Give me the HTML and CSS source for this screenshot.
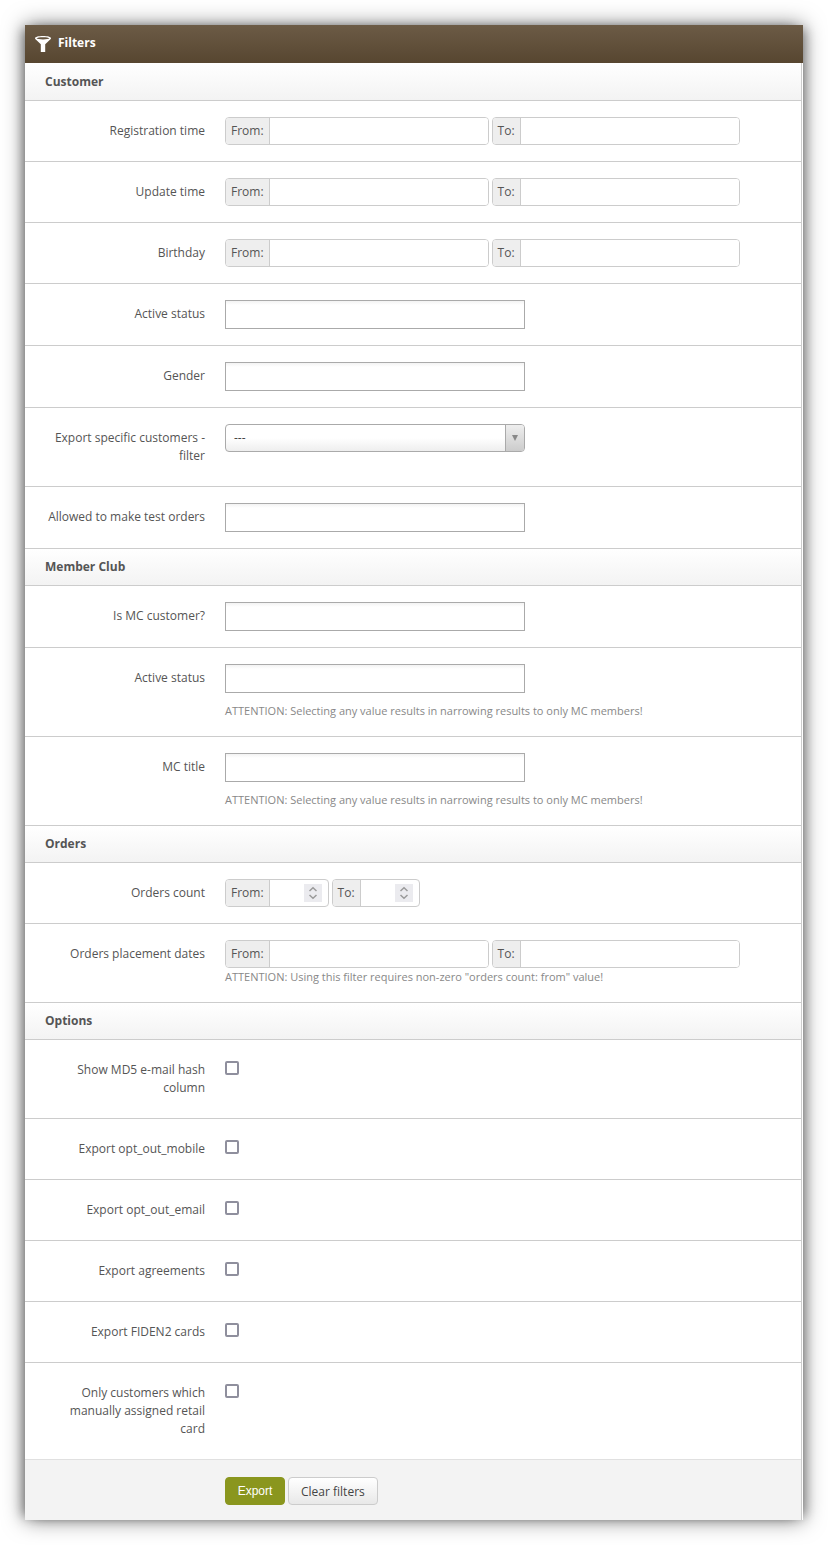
FILE: index.html
```html
<!DOCTYPE html>
<html lang="en">
<head>
<meta charset="utf-8">
<title>Filters</title>
<link rel="stylesheet" href="styles.css">
</head>
<body>
<form class="panel">
  <h2 class="panel-title">
    <svg class="funnel" width="16" height="16" viewBox="0 0 16 16" aria-hidden="true">
      <path fill="#fff" fill-rule="evenodd" d="M8 0C3.600 0 0 .9 0 2.300c0 .5.300.9.800 1.300L5.800 8.300V16H10.200V8.300L15.200 3.600c.5-.4.800-.8.800-1.300C16 .9 12.400 0 8 0ZM8 1.200c3.300 0 5.900.5 6.500 1.100-.6.600-3.200 1.100-6.500 1.100S2.100 2.900 1.500 2.300C2.100 1.700 4.700 1.200 8 1.200Z"/>
    </svg>
    <span class="title-text">Filters</span>
  </h2>
  <div class="panel-body">
    <h3 class="section first">Customer</h3>
    <div class="row"><label class="lbl">Registration time</label><div class="ctl"><div class="pair">
      <span class="grp"><span class="add">From:</span><input class="txt" type="text"></span>
      <span class="grp"><span class="add">To:</span><input class="txt" type="text"></span>
    </div></div></div>
    <div class="row"><label class="lbl">Update time</label><div class="ctl"><div class="pair">
      <span class="grp"><span class="add">From:</span><input class="txt" type="text"></span>
      <span class="grp"><span class="add">To:</span><input class="txt" type="text"></span>
    </div></div></div>
    <div class="row"><label class="lbl">Birthday</label><div class="ctl"><div class="pair">
      <span class="grp"><span class="add">From:</span><input class="txt" type="text"></span>
      <span class="grp"><span class="add">To:</span><input class="txt" type="text"></span>
    </div></div></div>
    <div class="row"><label class="lbl">Active status</label><div class="ctl"><input class="box" type="text"></div></div>
    <div class="row"><label class="lbl">Gender</label><div class="ctl"><input class="box" type="text"></div></div>
    <div class="row"><label class="lbl">Export specific customers - filter</label><div class="ctl">
      <div class="sel"><span class="sel-val">---</span><span class="sel-arrow"><span class="tri"></span></span></div>
    </div></div>
    <div class="row"><label class="lbl">Allowed to make test orders</label><div class="ctl"><input class="box" type="text"></div></div>

    <h3 class="section">Member Club</h3>
    <div class="row"><label class="lbl">Is MC customer?</label><div class="ctl"><input class="box" type="text"></div></div>
    <div class="row"><label class="lbl">Active status</label><div class="ctl"><input class="box" type="text"><p class="note spaced">ATTENTION: Selecting any value results in narrowing results to only MC members!</p></div></div>
    <div class="row"><label class="lbl">MC title</label><div class="ctl"><input class="box" type="text"><p class="note spaced">ATTENTION: Selecting any value results in narrowing results to only MC members!</p></div></div>

    <h3 class="section">Orders</h3>
    <div class="row"><label class="lbl">Orders count</label><div class="ctl"><div class="pair">
      <span class="grp"><span class="add">From:</span><input class="num num-from" type="number"><span class="spin"><svg width="18" height="18" viewBox="0 0 18 18" aria-hidden="true"><path fill="none" stroke="#9a9a9a" stroke-width="1.500" d="M5.500 7 9 3.800 12.500 7M5.500 11 9 14.200 12.500 11"/></svg></span></span>
      <span class="grp"><span class="add">To:</span><input class="num num-to" type="number"><span class="spin"><svg width="18" height="18" viewBox="0 0 18 18" aria-hidden="true"><path fill="none" stroke="#9a9a9a" stroke-width="1.500" d="M5.500 7 9 3.800 12.500 7M5.500 11 9 14.200 12.500 11"/></svg></span></span>
    </div></div></div>
    <div class="row"><label class="lbl">Orders placement dates</label><div class="ctl"><div class="pair">
      <span class="grp"><span class="add">From:</span><input class="txt" type="text"></span>
      <span class="grp"><span class="add">To:</span><input class="txt" type="text"></span>
    </div><p class="note">ATTENTION: Using this filter requires non-zero "orders count: from" value!</p></div></div>

    <h3 class="section">Options</h3>
    <div class="row"><label class="lbl">Show MD5 e-mail hash column</label><div class="ctl"><input class="chk" type="checkbox"></div></div>
    <div class="row"><label class="lbl">Export opt_out_mobile</label><div class="ctl"><input class="chk" type="checkbox"></div></div>
    <div class="row"><label class="lbl">Export opt_out_email</label><div class="ctl"><input class="chk" type="checkbox"></div></div>
    <div class="row"><label class="lbl">Export agreements</label><div class="ctl"><input class="chk" type="checkbox"></div></div>
    <div class="row"><label class="lbl">Export FIDEN2 cards</label><div class="ctl"><input class="chk" type="checkbox"></div></div>
    <div class="row row-last"><label class="lbl">Only customers which manually assigned retail card</label><div class="ctl"><input class="chk" type="checkbox"></div></div>

    <div class="footer">
      <button class="btn btn-primary" type="button">Export</button>
      <button class="btn" type="button">Clear filters</button>
    </div>
  </div>
</form>
</body>
</html>
```

FILE: styles.css
```css
* { box-sizing: border-box; }
html, body { margin: 0; padding: 0; background: #fff; }
body { padding: 25px; font: 12px/18px "Open Sans", sans-serif; color: #555; }

.panel {
  width: 778px; background: #fff;
  box-shadow: 0 0 20px rgba(0, 0, 0, .5), -6px 0 10px -4px rgba(0, 0, 0, .35), 6px 0 10px -4px rgba(0, 0, 0, .3);
}

.panel-title {
  margin: 0; height: 38px; display: flex; align-items: center; gap: 7px; padding-left: 10px;
  background: linear-gradient(#6c5b46, #574630);
  color: #fff; font-size: 12px; font-weight: 700;
}
.funnel { display: block; }
.title-text { position: relative; top: -1px; }

.panel-body { margin-right: 1px; border-right: 1px solid #ccc; }

.section {
  margin: 0; height: 37px; padding: 0 20px; display: flex; align-items: center;
  background: linear-gradient(#fff, #f3f3f3);
  border-bottom: 1px solid #ccc;
  color: #555; font-size: 12px; font-weight: 700;
}
.section.first { height: 38px; }

.row { display: flex; padding: 16px 0; border-bottom: 1px solid #ccc; }
.row-last { border-bottom-color: #e0e0e0; }
.lbl { flex: 0 0 180px; padding: 5px 0 5px 20px; text-align: right; }
.ctl { margin-left: 20px; flex: 1; }

.pair { display: flex; gap: 3px; }
.grp { display: flex; height: 28px; border: 1px solid #ccc; border-radius: 4px; overflow: hidden; background: #fff; }
.add { padding: 0 5px; line-height: 26px; background: #eee; border-right: 1px solid #ccc; color: #555; }
.txt { width: 218px; border: 0; padding: 0 6px; outline: 0; font: inherit; background: #fff; }
.num { border: 0; padding: 0 6px; outline: 0; font: inherit; background: #fff; appearance: textfield; }
.num-from, .num-to { width: 34px; }
.spin { flex: 0 0 18px; height: 18px; margin: 4px 6px 0 0; background: #ebebef; }
.spin svg { display: block; }

.box {
  display: block; width: 300px; height: 29px; padding: 0 6px; border: 1px solid #aaa; outline: 0;
  background: linear-gradient(#f3f3f3, #fff 4px); font: inherit;
}

.sel {
  display: flex; width: 300px; height: 28px; border: 1px solid #aaa; border-radius: 4px; overflow: hidden;
  background: linear-gradient(#fff 50%, #eee);
}
.sel-val { flex: 1; padding-left: 8px; line-height: 26px; color: #444; }
.sel-arrow {
  flex: 0 0 19px; display: flex; align-items: center; justify-content: center;
  border-left: 1px solid #aaa; background: linear-gradient(#eee, #ccc);
}
.tri { width: 0; height: 0; border: 3.5px solid transparent; border-top: 6px solid #888; border-bottom: 0; }

.note { margin: 0; font-size: 11px; color: #888; }
.note.spaced { margin-top: 9px; }

.chk {
  appearance: none; display: block; margin: 5px 0 0; width: 14px; height: 14px;
  border: 2px solid #8f8f9d; border-radius: 2px; background: #fff;
}

.footer { display: flex; gap: 3px; padding: 17px 0 15px 200px; background: #f3f3f3; height: 60px; }
.btn {
  height: 28px; padding: 0 12px; border: 1px solid #ccc; border-radius: 4px;
  background: linear-gradient(#fff, #e8e8e8); color: #444; font: 12px "Open Sans", sans-serif;
}
.btn-primary {
  width: 60px; padding: 0; background: #8a961e; border-color: #8a961e; color: #fff;
  font-family: "Liberation Sans", sans-serif;
}
```
